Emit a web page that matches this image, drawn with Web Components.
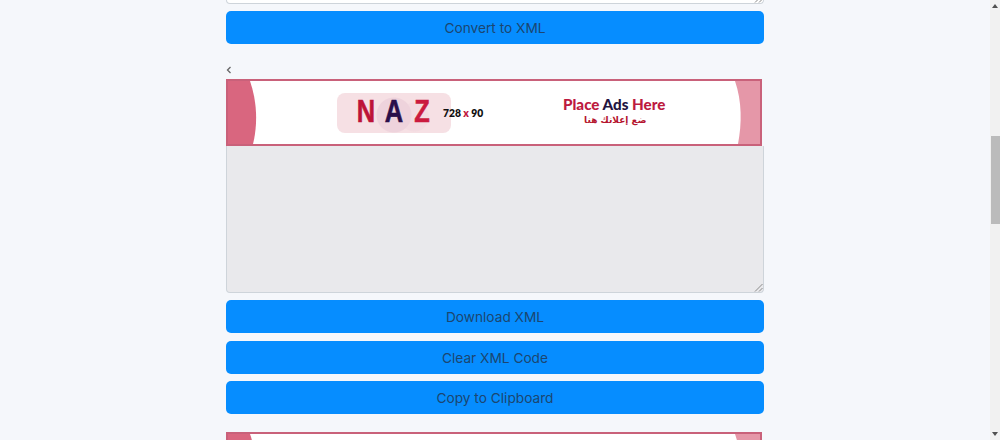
<!DOCTYPE html>
<html>
<head>
<meta charset="utf-8">
<title>Convert to XML</title>
<style>
  html, body { margin: 0; height: 440px; overflow: hidden; }
  body { display: flex; background: #f5f7fb; font-family: "Inter", "Noto Sans", sans-serif; }
</style>
</head>
<body>
<page-shell>
  <code-box variant="stub"></code-box>
  <action-button style="margin-top:7px">Convert to XML</action-button>
  <pager-mark></pager-mark>
  <ad-banner></ad-banner>
  <code-box variant="output"></code-box>
  <action-button style="margin-top:7px">Download XML</action-button>
  <action-button style="margin-top:8px">Clear XML Code</action-button>
  <action-button style="margin-top:7px">Copy to Clipboard</action-button>
  <ad-banner blank style="margin-top:18px"></ad-banner>
</page-shell>
<fake-scrollbar></fake-scrollbar>
<script>
class PageShell extends HTMLElement {
  constructor() {
    super();
    this.attachShadow({ mode: 'open' }).innerHTML = `
      <style>
        :host { flex: 1; display: flex; justify-content: center; height: 440px; overflow: hidden; }
        .col { width: 538px; display: flex; flex-direction: column; flex: none; }
      </style>
      <div class="col"><slot></slot></div>`;
  }
}

class CodeBox extends HTMLElement {
  constructor() {
    super();
    this.attachShadow({ mode: 'open' }).innerHTML = `
      <style>
        :host { display: block; box-sizing: border-box; position: relative; flex: none; }
        :host([variant="stub"]) { height: 4px; background: #fff; border: 1px solid #ced4da; border-top: 0; border-radius: 0 0 4px 4px; }
        :host([variant="output"]) { height: 147px; background: #e9e9ec; border: 1px solid #ced4da; border-top: 0; border-radius: 0 0 4px 4px; }
        svg { position: absolute; right: 0; bottom: 0; display: block; }
      </style>
      <svg width="9" height="9" viewBox="0 0 9 9"><path d="M1 8.5 8.5 1M5 8.5 8.5 5" stroke="#8a8a8a" stroke-width="1" fill="none"/></svg>`;
  }
}

class ActionButton extends HTMLElement {
  constructor() {
    super();
    this.attachShadow({ mode: 'open' }).innerHTML = `
      <style>
        :host { display: flex; flex: none; height: 33px; align-items: center; justify-content: center;
          background: #068dff; border-radius: 5px; color: #1c4670; font-size: 13.7px; }
      </style>
      <slot></slot>`;
  }
}

class PagerMark extends HTMLElement {
  constructor() {
    super();
    this.attachShadow({ mode: 'open' }).innerHTML = `
      <style>
        :host { display: block; flex: none; height: 35px; box-sizing: border-box; padding-top: 22px; }
        svg { display: block; }
      </style>
      <svg width="6" height="8" viewBox="0 0 6 8"><path d="M4.5 1 1.5 4l3 3" stroke="#666" stroke-width="1.3" fill="none"/></svg>`;
  }
}

class AdBanner extends HTMLElement {
  constructor() {
    super();
    const blank = this.hasAttribute('blank');
    this.attachShadow({ mode: 'open' }).innerHTML = `
      <style>
        :host { display: block; flex: none; width: 536px; height: 67px; box-sizing: border-box; position: relative;
          background: #fff; border: 2px solid #c9617a; overflow: hidden; font-family: "Lato", "Noto Sans", sans-serif; }
        .row { display: flex; height: 100%; align-items: center; position: relative; padding-left: 109px; box-sizing: border-box; }
        .curve { position: absolute; top: 0; left: 0; display: block; }
        .logo { width: 114px; height: 40px; border-radius: 8px; flex: none; margin-top: 1px;
          background: radial-gradient(circle at 50% 55%, #eed3dc 0 17px, transparent 18px),
                      radial-gradient(circle at 68% 60%, #f3dbe1 0 14px, transparent 15px), #f6e0e4;
          display: flex; align-items: center; justify-content: center; padding-bottom: 2px; box-sizing: border-box;
          font: 700 31px "Liberation Sans", sans-serif; color: #bd1338; -webkit-text-stroke: .6px; }
        .logo span { display: block; width: 28px; text-align: center; transform: scaleX(.82); }
        .logo .a { color: #2a0f4a; }
        .logo .z { color: #cb1a3e; }
        .size { font-size: 10.3px; font-weight: 800; color: #111; margin-left: -8px; margin-top: 1px; white-space: nowrap; }
        .size span { color: #c01a40; }
        .place { margin-left: 80px; display: flex; flex-direction: column; align-items: center; width: 104px; margin-top: -2px; transform: translateX(-1px); }
        .big { font-size: 15.2px; font-weight: 900; color: #bd1a3f; white-space: nowrap; line-height: 18px; margin-top: -1px; }
        .big span { color: #23143f; }
        .ar { font-family: "DejaVu Sans", sans-serif; font-size: 9px; font-weight: 700; color: #b5152f; line-height: 14px; margin-left: 2px; }
      </style>
      <svg class="curve" width="532" height="63" viewBox="0 0 532 63">
        <path d="M0 0H22C29 20 30 43 25 63H0Z" fill="#d9667f"/>
        <path d="M532 0H507C514 20 514 43 510 63H532Z" fill="#e597a8"/>
      </svg>
      ${blank ? '' : `<div class="row">
        <div class="logo"><span>N</span><span class="a">A</span><span class="z">Z</span></div>
        <div class="size">728 <span>x</span> 90</div>
        <div class="place">
          <div class="big">Place <span>Ads</span> Here</div>
          <div class="ar" dir="rtl">ضع إعلانك هنا</div>
        </div>
      </div>`}`;
  }
}

class FakeScrollbar extends HTMLElement {
  constructor() {
    super();
    this.attachShadow({ mode: 'open' }).innerHTML = `
      <style>
        :host { display: block; flex: none; width: 10px; height: 440px; background: #f1f1f1; position: relative; }
        .thumb { position: absolute; top: 136px; left: 1px; right: 0; height: 88px; background: #bbb; }
        svg { position: absolute; left: 2px; display: block; }
        .up { top: 4px; }
        .down { bottom: 4px; }
      </style>
      <svg class="up" width="6" height="4" viewBox="0 0 6 4"><path d="M0 4h6L3 0z" fill="#505050"/></svg>
      <div class="thumb"></div>
      <svg class="down" width="6" height="4" viewBox="0 0 6 4"><path d="M0 0h6L3 4z" fill="#505050"/></svg>`;
  }
}

customElements.define('page-shell', PageShell);
customElements.define('code-box', CodeBox);
customElements.define('action-button', ActionButton);
customElements.define('pager-mark', PagerMark);
customElements.define('ad-banner', AdBanner);
customElements.define('fake-scrollbar', FakeScrollbar);
</script>
</body>
</html>
